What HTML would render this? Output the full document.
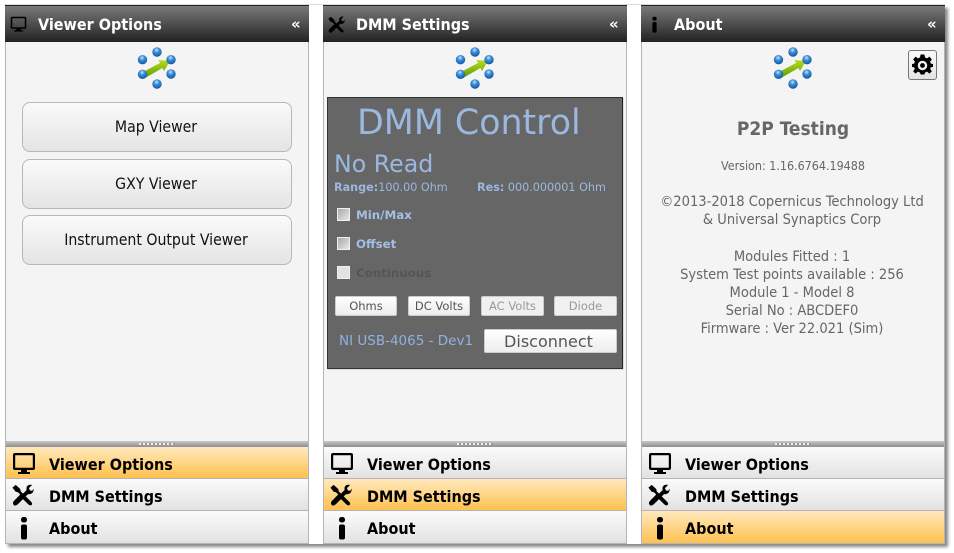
<!DOCTYPE html>
<html><head><meta charset="utf-8"><style>
*{box-sizing:border-box}
html,body{margin:0;padding:0;width:954px;height:553px;background:#fff;overflow:hidden;font-family:"DejaVu Sans","Liberation Sans",sans-serif}
.c,.ttl,.nav,.btn,.ab{font-family:"DejaVu Sans Condensed","DejaVu Sans",sans-serif;font-stretch:condensed}
.win{position:absolute;left:5px;top:5px;width:940px;height:539px;background:#fff;box-shadow:3px 3px 3px #888,0 -1px 0 #ddd}
.p{position:absolute;top:5px;width:304px;height:539px;background:#f4f4f4;border:1px solid #b4b4b4;border-top:0}
.p>*{position:absolute}
.top{left:-1px;top:0;width:304px;height:37px;border-top:1px solid #222;background:linear-gradient(#7a7a7a,#222)}
.ttl{left:32px;top:9.500px;font-size:16px;font-weight:bold;color:#fff;white-space:nowrap;line-height:20px}
.chev{left:285px;top:9px;color:#fff;font-size:15px;line-height:20px;font-weight:bold}
.split{left:0;top:436px;width:302px;height:6px;background:linear-gradient(#c8c8c8,#8e8e8e)}
.grip{left:133px;top:438px;width:36px;height:2px;background:repeating-linear-gradient(90deg,#eee 0 2px,#999 2px 4px)}
.nav{left:0;width:302px;height:32px;background:linear-gradient(#fbfbfb,#e2e2e2);border-bottom:1px solid #b4b4b4;font-size:16px;font-weight:bold;color:#000;line-height:35px;padding-left:43px;white-space:nowrap}
.nav.on{background:linear-gradient(#ffe9bd,#ffc14f)}
.n1{top:442px}.n2{top:474px}.n3{top:506px;height:32px;border-bottom:0}
.ico{position:absolute}
.btn{left:16px;height:50px;border:1px solid #b8b8b8;border-radius:8px;background:linear-gradient(#fafafa,#e4e4e4);text-align:center;font-size:15.700px;line-height:48px;color:#111;width:270px;padding-right:2px}
.dmm{left:3px;top:92px;width:296px;height:272px;background:#666;border:1px solid #333;border-right-color:#222;box-shadow:1px 1px 0 #ddd}
.dmm>*{position:absolute;white-space:nowrap}
.b{color:#9ab8e0}
.chk{left:9px;width:13px;height:13px;background:linear-gradient(135deg,#a8a8a8,#e8e8e8);border:1px solid #f0f0f0}
.lab{left:28px;font-size:11.800px;font-weight:bold;color:#a3bfe6;line-height:14px}
.sb{top:198px;height:20px;background:linear-gradient(#fff,#ececec);border:1px solid #ccc;border-radius:2px;font-size:11.500px;text-align:center;line-height:18px;color:#555}
.sb.d{color:#999;background:#f0f0f0}
.ab{left:0;width:302px;text-align:center;color:#666;white-space:nowrap;font-size:14.550px;line-height:18px}
</style></head><body>
<div class="win"></div>
<svg width="0" height="0" style="position:absolute"><defs>
<radialGradient id="bl" cx=".45" cy=".3" r=".75"><stop offset="0" stop-color="#cfe6fa"/><stop offset=".35" stop-color="#3f90d8"/><stop offset="1" stop-color="#0a4f9e"/></radialGradient>
<linearGradient id="gr" x1="0" y1="0" x2="0" y2="1"><stop offset="0" stop-color="#b7dc1e"/><stop offset="1" stop-color="#5f9a05"/></linearGradient>
<symbol id="logo" viewBox="0 0 42 42">
<path d="M6 25.500L24 16L22.500 13L34 14L28 24L26.500 21L9 31Z" fill="url(#gr)"/>
<g fill="url(#bl)"><circle cx="21" cy="5" r="4.700"/><circle cx="6.500" cy="12.700" r="4.700"/><circle cx="35" cy="12.700" r="4.700"/><circle cx="6.500" cy="27.300" r="4.700"/><circle cx="35" cy="27" r="4.700"/><circle cx="21" cy="37" r="4.700"/></g>
</symbol>
<symbol id="mon" viewBox="0 0 24 24"><path fill-rule="evenodd" d="M3 1H21Q23 1 23 3V16Q23 18 21 18H15V20H18V22H6V20H9V18H3Q1 18 1 16V3Q1 1 3 1ZM3.200 3.200V15.800H20.800V3.200Z"/></symbol>
<symbol id="wr" viewBox="0 0 24 24"><path d="M4 1L9 5.500L9.500 8L12 10.500L16 6.500Q15 2.500 18.500 1Q20.500 .5 22 1L18.500 4.500L19.500 7L22 7.500L23.500 5Q24 9 21 10.500Q19 11.500 17.500 11L15 13.500L21 19.500Q23 22 21 23Q19.500 24 17.500 22L12 16.500L6.500 22Q4 24.500 2 23Q0 21 2 18.500L9 11.500L6.500 9L4 8.500L.5 4Z"/></symbol>
<symbol id="inf" viewBox="0 0 24 24"><rect x="9" y="1" width="6" height="5.500" rx="2.500"/><rect x="9" y="8.500" width="6" height="15" rx="2"/></symbol>
</defs></svg>

<!-- Panel 1 -->
<div class="p" style="left:5px">
<div class="top"></div>
<svg class="ico" style="left:4px;top:11px" width="17" height="17" fill="#000"><use href="#mon"/></svg>
<div class="ttl">Viewer Options</div><div class="chev">«</div>
<svg style="left:130px;top:42px" width="42" height="42"><use href="#logo"/></svg>
<div class="btn" style="top:97px">Map Viewer</div>
<div class="btn" style="top:154px">GXY Viewer</div>
<div class="btn" style="top:210px">Instrument Output Viewer</div>
<div class="split"></div><div class="grip"></div>
<div class="nav n1 on">Viewer Options</div>
<div class="nav n2">DMM Settings</div>
<div class="nav n3">About</div>
<svg style="left:6px;top:447px" width="24" height="24"><use href="#mon"/></svg>
<svg style="left:6px;top:479px" width="22" height="22"><use href="#wr"/></svg>
<svg style="left:6px;top:511px" width="24" height="24"><use href="#inf"/></svg>
</div>

<!-- Panel 2 -->
<div class="p" style="left:323px">
<div class="top"></div>
<svg class="ico" style="left:4px;top:11px" width="17" height="17" fill="#000"><use href="#wr"/></svg>
<div class="ttl">DMM Settings</div><div class="chev">«</div>
<svg style="left:130px;top:42px" width="42" height="42"><use href="#logo"/></svg>
<div class="dmm">
<div class="b" style="left:29px;top:3px;font-size:34.800px;line-height:44px">DMM Control</div>
<div class="b" style="left:6px;top:51px;font-size:23.700px;line-height:30px">No Read</div>
<div class="b" style="left:6px;top:83px;font-size:11.200px;line-height:14px"><b>Range:</b>100.00 Ohm</div>
<div class="b" style="left:149px;top:83px;font-size:11.200px;line-height:14px"><b>Res:</b> 000.000001 Ohm</div>
<div class="chk" style="top:110px"></div><div class="lab" style="top:110px">Min/Max</div>
<div class="chk" style="top:139px"></div><div class="lab" style="top:139px">Offset</div>
<div class="chk" style="top:168px;background:#e2e2e2"></div><div class="lab" style="top:168px;color:#555">Continuous</div>
<div class="sb" style="left:7px;width:62px">Ohms</div>
<div class="sb" style="left:80px;width:62px">DC Volts</div>
<div class="sb d" style="left:153px;width:63px">AC Volts</div>
<div class="sb d" style="left:226px;width:63px">Diode</div>
<div class="b" style="left:11px;top:234px;font-size:13.500px;line-height:18px;color:#8fb2e0">NI USB-4065 - Dev1</div>
<div class="sb" style="left:156px;top:231px;width:133px;height:24px;font-size:16px;line-height:24px;color:#555;background:linear-gradient(#fff,#eee);padding-right:4px">Disconnect</div>
</div>
<div class="split"></div><div class="grip"></div>
<div class="nav n1">Viewer Options</div>
<div class="nav n2 on">DMM Settings</div>
<div class="nav n3">About</div>
<svg style="left:6px;top:447px" width="24" height="24"><use href="#mon"/></svg>
<svg style="left:6px;top:479px" width="22" height="22"><use href="#wr"/></svg>
<svg style="left:6px;top:511px" width="24" height="24"><use href="#inf"/></svg>
</div>

<!-- Panel 3 -->
<div class="p" style="left:641px">
<div class="top"></div>
<svg class="ico" style="left:4px;top:11px" width="17" height="17" fill="#000"><use href="#inf"/></svg>
<div class="ttl">About</div><div class="chev">«</div>
<svg style="left:130px;top:42px" width="42" height="42"><use href="#logo"/></svg>
<div style="left:266px;top:45px;width:29px;height:30px;border:1px solid #777;border-radius:3px;background:linear-gradient(#fafafa,#e4e4e4)"></div>
<svg style="left:270px;top:49px" width="21" height="22" viewBox="0 0 22 22"><path fill="#000" fill-rule="evenodd" d="M9 1H13L13.600 4L15.800 5L18.300 3.200L20.800 6.200L19 8.500L19.700 10.500L22 11V14L19.700 14.500L19 16L20.800 18.500L18.300 21L15.800 19L13.600 20L13 22H9L8.400 20L6.200 19L3.700 21L1.200 18.500L3 16L2.300 14.500L0 14V11L2.300 10.500L3 8.500L1.200 6.200L3.700 3.200L6.200 5L8.400 4ZM11 7.500A5 5 0 1 0 11.010 17.500A5 5 0 1 0 11 7.500ZM11 10A2.500 2.500 0 1 1 10.990 15A2.500 2.500 0 1 1 11 10Z" transform="translate(0 -1)"/></svg>
<div class="ab" style="top:114px;font-size:19px;font-weight:bold;line-height:20px">P2P Testing</div>
<div class="ab" style="top:153px;font-size:12.400px;line-height:16px">Version: 1.16.6764.19488</div>
<div class="ab" style="top:188px;left:-1px">©2013-2018 Copernicus Technology Ltd</div>
<div class="ab" style="top:206px;left:-1px">&amp; Universal Synaptics Corp</div>
<div class="ab" style="top:243px;left:-1px">Modules Fitted : 1</div>
<div class="ab" style="top:261px;left:-1px">System Test points available : 256</div>
<div class="ab" style="top:279px;left:-1px">Module 1 - Model 8</div>
<div class="ab" style="top:297px;left:-1px">Serial No : ABCDEF0</div>
<div class="ab" style="top:315px;left:-1px">Firmware : Ver 22.021 (Sim)</div>
<div class="split"></div><div class="grip"></div>
<div class="nav n1">Viewer Options</div>
<div class="nav n2">DMM Settings</div>
<div class="nav n3 on">About</div>
<svg style="left:6px;top:447px" width="24" height="24"><use href="#mon"/></svg>
<svg style="left:6px;top:479px" width="22" height="22"><use href="#wr"/></svg>
<svg style="left:6px;top:511px" width="24" height="24"><use href="#inf"/></svg>
</div>
</body></html>
